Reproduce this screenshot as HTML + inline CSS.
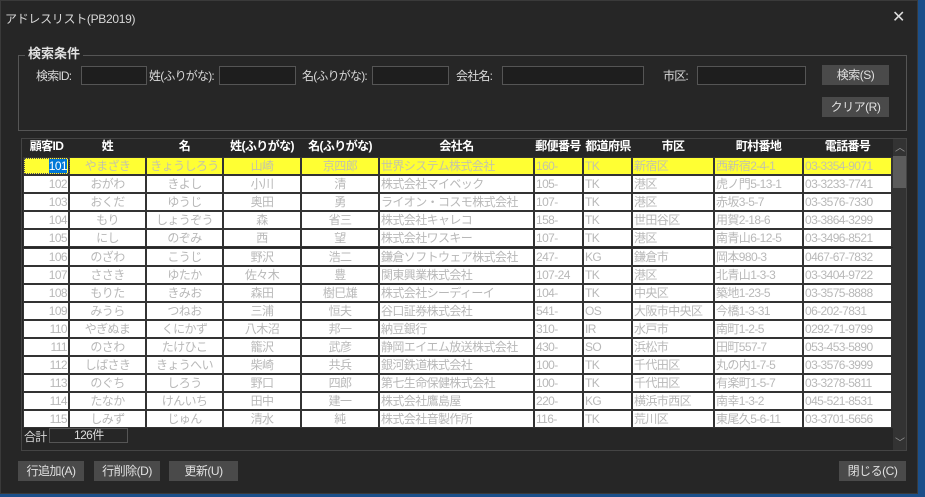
<!DOCTYPE html>
<html><head><meta charset="utf-8"><style>
*{box-sizing:border-box;margin:0;padding:0}
body{width:925px;height:497px;background:#1b4f8a;position:relative;overflow:hidden;font-family:"Liberation Sans","Noto Sans CJK JP",sans-serif;}
#win{position:absolute;left:0;top:0;width:918px;height:494px;background:#262626;border:1px solid #3a3a3a}
.a{position:absolute;white-space:nowrap}
.t{color:#d8d8d8;font-size:12px;letter-spacing:-0.8px}
.inp{position:absolute;height:19px;background:#1e1e1e;border:1px solid #555}
.btn{position:absolute;background:#4a4a4a;color:#e0e0e0;font-size:12px;letter-spacing:-0.5px;text-align:center;line-height:20px}
.hd{position:absolute;top:137px;color:#fff;font-weight:bold;font-size:12px;letter-spacing:-0.6px;text-align:center;line-height:17px;white-space:nowrap}
.row{position:absolute;left:22px;width:870px;height:18px;background:#fff;border:1px solid #333}
.row.y{background:#ffff33}
.c{position:absolute;top:0;height:16px;border-right:2px solid #333;color:#b8b8b8;font-size:12px;letter-spacing:-0.6px;line-height:16px;overflow:hidden;white-space:nowrap;padding:0 1px}
.y .c{color:#c4c4a8}
.r{text-align:right}.m{text-align:center}
</style></head><body>
<div id="win">
<div class="a t" style="left:4px;top:9px;font-size:12px;letter-spacing:-0.3px">アドレスリスト(PB2019)</div>
<div class="a" style="left:891px;top:6px;color:#ddd;font-size:16px">✕</div>
<div class="a" style="left:17px;top:54px;width:889px;height:76px;border:1px solid #555"></div>
<div class="a" style="left:24px;top:42px;background:#262626;padding:0 3px;color:#e0e0e0;font-weight:bold;font-size:13px">検索条件</div>
<div class="a t" style="left:35px;top:66px">検索ID:</div><div class="inp" style="left:80px;top:65px;width:66px"></div>
<div class="a t" style="left:148px;top:66px">姓(ふりがな):</div><div class="inp" style="left:218px;top:65px;width:77px"></div>
<div class="a t" style="left:301px;top:66px">名(ふりがな):</div><div class="inp" style="left:371px;top:65px;width:77px"></div>
<div class="a t" style="left:455px;top:66px">会社名:</div><div class="inp" style="left:501px;top:65px;width:142px"></div>
<div class="a t" style="left:662px;top:66px">市区:</div><div class="inp" style="left:696px;top:65px;width:109px"></div>
<div class="btn" style="left:821px;top:64px;width:67px">検索(S)</div>
<div class="btn" style="left:821px;top:96px;width:67px">クリア(R)</div>

<div class="a" style="left:20px;top:137px;width:886px;height:313px;border:1px solid #444;background:#262626"></div>
<div class="a" style="left:892px;top:138px;width:13px;height:311px;background:#333"></div>
<div class="a" style="left:892px;top:155px;width:13px;height:32px;background:#5c5c5c"></div>
<div class="a" style="left:894px;top:138px;color:#999;font-size:10px">︿</div>
<div class="a" style="left:894px;top:433px;color:#999;font-size:10px">﹀</div>

<div class="hd" style="left:23px;width:45px">顧客ID</div>
<div class="hd" style="left:68px;width:77px">姓</div>
<div class="hd" style="left:145px;width:77px">名</div>
<div class="hd" style="left:222px;width:78px">姓(ふりがな)</div>
<div class="hd" style="left:300px;width:78px">名(ふりがな)</div>
<div class="hd" style="left:378px;width:155px">会社名</div>
<div class="hd" style="left:532px;width:50px">郵便番号</div>
<div class="hd" style="left:582px;width:50px">都道府県</div>
<div class="hd" style="left:631px;width:82px">市区</div>
<div class="hd" style="left:713px;width:89px">町村番地</div>
<div class="hd" style="left:802px;width:89px">電話番号</div>

<div id="rows"></div>

<div class="a t" style="left:23px;top:427px">合計</div>
<div class="a" style="left:48px;top:427px;width:79px;height:15px;border:1px solid #555;color:#ddd;font-size:12px;padding-left:24px;line-height:13px;letter-spacing:-0.6px">126件</div>

<div class="btn" style="left:17px;top:460px;width:66px">行追加(A)</div>
<div class="btn" style="left:93px;top:460px;width:66px">行削除(D)</div>
<div class="btn" style="left:168px;top:460px;width:69px">更新(U)</div>
<div class="btn" style="left:838px;top:460px;width:67px">閉じる(C)</div>
</div>
<script>
var d=[
["101","やまざき","きょうしろう","山崎","京四郎","世界システム株式会社","160-","TK","新宿区","西新宿2-4-1","03-3354-9071"],
["102","おがわ","きよし","小川","清","株式会社マイベック","105-","TK","港区","虎ノ門5-13-1","03-3233-7741"],
["103","おくだ","ゆうじ","奥田","勇","ライオン・コスモ株式会社","107-","TK","港区","赤坂3-5-7","03-3576-7330"],
["104","もり","しょうぞう","森","省三","株式会社キャレコ","158-","TK","世田谷区","用賀2-18-6","03-3864-3299"],
["105","にし","のぞみ","西","望","株式会社ワスキー","107-","TK","港区","南青山6-12-5","03-3496-8521"],
["106","のざわ","こうじ","野沢","浩二","鎌倉ソフトウェア株式会社","247-","KG","鎌倉市","岡本980-3","0467-67-7832"],
["107","ささき","ゆたか","佐々木","豊","関東興業株式会社","107-24","TK","港区","北青山1-3-3","03-3404-9722"],
["108","もりた","きみお","森田","樹巳雄","株式会社シーディーイ","104-","TK","中央区","築地1-23-5","03-3575-8888"],
["109","みうら","つねお","三浦","恒夫","谷口証券株式会社","541-","OS","大阪市中央区","今橋1-3-31","06-202-7831"],
["110","やぎぬま","くにかず","八木沼","邦一","納豆銀行","310-","IR","水戸市","南町1-2-5","0292-71-9799"],
["111","のさわ","たけひこ","籠沢","武彦","静岡エイエム放送株式会社","430-","SO","浜松市","田町557-7","053-453-5890"],
["112","しばさき","きょうへい","柴崎","共兵","銀河鉄道株式会社","100-","TK","千代田区","丸の内1-7-5","03-3576-3999"],
["113","のぐち","しろう","野口","四郎","第七生命保健株式会社","100-","TK","千代田区","有楽町1-5-7","03-3278-5811"],
["114","たなか","けんいち","田中","建一","株式会社鷹島屋","220-","KG","横浜市西区","南幸1-3-2","045-521-8531"],
["115","しみず","じゅん","清水","純","株式会社音製作所","116-","TK","荒川区","東尾久5-6-11","03-3701-5656"]];
var x=[0,46,123,200,278,356,511,560,609,691,780,869],al=["r","m","m","m","m","","","","","",""],h="";
d.forEach(function(r,i){h+='<div class="row'+(i==0?' y':'')+'" style="top:'+(156+Math.round(i*18.1))+'px">';
r.forEach(function(v,j){var s=v;if(i==0&&j==0)s='<span style="background:#0078d7;color:#fff">101</span>';
h+='<div class="c '+al[j]+'" style="left:'+x[j]+'px;width:'+(x[j+1]-x[j])+'px'+(i==0&&j==0?';outline:1px dotted #555;outline-offset:-1px':'')+'">'+s+'</div>'});h+='</div>'});
document.getElementById('rows').innerHTML=h;
</script>
</body></html>
